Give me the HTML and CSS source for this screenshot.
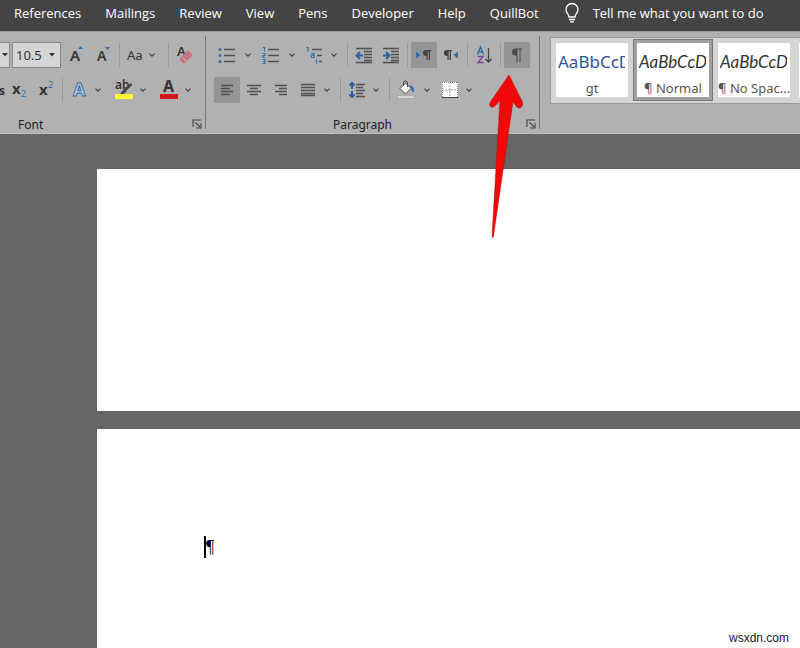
FILE: index.html
```html
<!DOCTYPE html>
<html lang="en">
<head>
    <meta charset="utf-8">
    <title>Document</title>
    <link rel="stylesheet" href="styles.css">
</head>
<body>
    <svg class="defs" aria-hidden="true">
        <symbol id="chevron" viewBox="0 0 6 4"><path d="M.5 .7 3 3.200 5.500 .7" fill="none" stroke="#444" stroke-width="1.2"/></symbol>
        <symbol id="launcher" viewBox="0 0 10 10"><path d="M1 8V1h8M3.500 3.500l4.500 4.500M9 4v5H4" fill="none" stroke="#444" stroke-width="1.1"/></symbol>
    </svg>

    <nav class="tabs">
        <a href="#">References</a>
        <a href="#">Mailings</a>
        <a href="#">Review</a>
        <a href="#">View</a>
        <a href="#">Pens</a>
        <a href="#">Developer</a>
        <a href="#">Help</a>
        <a href="#">QuillBot</a>
        <button class="tell-me">
            <svg width="16" height="20" viewBox="0 0 16 20" fill="none" stroke="#fff" stroke-width="1.3"><path d="M5 14c0-3-3-4-3-7.500a6 6 0 0 1 12 0c0 3.500-3 4.500-3 7.500zM5 16.500h6M6 18.800h4"/></svg>
            <span>Tell me what you want to do</span>
        </button>
    </nav>

    <header class="ribbon">
        <section class="group font-group">
            <div class="row">
                <button class="font-name" aria-label="Font name"><svg width="6" height="4"><path d="M0 0h6L3 3.500z" fill="#333"/></svg></button>
                <span class="size-box">
                    <select aria-label="Font size"><option>10.5</option></select>
                    <svg width="6" height="4"><path d="M0 0h6L3 3.500z" fill="#333"/></svg>
                </span>
                <button class="tool" aria-label="Grow font"><svg width="20" height="20"><text x="4" y="16" class="glyph g15 medium">A</text><path d="M12 4l2.500-3L17 4z" fill="#2f6fae"/></svg></button>
                <button class="tool" aria-label="Shrink font"><svg width="20" height="20"><text x="4" y="16" class="glyph g14 medium">A</text><path d="M12 2h5l-2.500 3z" fill="#2f6fae"/></svg></button>
                <span class="sep"></span>
                <button class="case">Aa<svg width="6" height="4"><use href="#chevron"/></svg></button>
                <span class="sep"></span>
                <button class="tool" aria-label="Clear formatting"><svg width="20" height="20"><text x="2" y="11" class="glyph g13 medium">A</text><path d="M5 13.500 12 6q1-1 2 0l3 3q1 1 0 2l-7 7q-1 .7-2 0l-3-3q-.6-.8 0-1.500z" fill="#c9727e"/><path d="M7 12l5 5" stroke="#e2b5ba"/></svg></button>
            </div>
            <div class="row">
                <button class="strike" aria-label="Strikethrough">s</button>
                <button class="tool" aria-label="Subscript"><svg width="20" height="20"><text x="3" y="14" class="glyph g15 bold">x</text><text x="12" y="17" class="glyph g9 blue">2</text></svg></button>
                <button class="tool" aria-label="Superscript"><svg width="20" height="20"><text x="3" y="15" class="glyph g15 bold">x</text><text x="12" y="8" class="glyph g9 blue">2</text></svg></button>
                <span class="sep"></span>
                <button class="tool split" aria-label="Text effects"><svg width="20" height="20"><text x="4" y="16" class="effect">A</text></svg><svg width="6" height="4"><use href="#chevron"/></svg></button>
                <button class="tool split spaced" aria-label="Highlight colour"><svg width="20" height="20"><text x="1" y="9" class="glyph g12 medium">ab</text><path d="M17.500 4 10 11" stroke="#444" stroke-width="2.500"/><path d="M10 9l2.500 2.500L9 14H6z" fill="#444"/><path d="M1 14h18v5H1z" fill="#fff72b"/></svg><svg width="6" height="4"><use href="#chevron"/></svg></button>
                <button class="tool split spaced" aria-label="Font colour"><svg width="20" height="20"><text x="4" y="12" class="glyph g16 bold">A</text><path d="M1 14h18v5H1z" fill="#d31a1a"/></svg><svg width="6" height="4"><use href="#chevron"/></svg></button>
            </div>
            <footer><span>Font</span><button class="launch" aria-label="Font settings"><svg width="10" height="10"><use href="#launcher"/></svg></button></footer>
        </section>

        <section class="group paragraph-group">
            <div class="row">
                <button class="tool split wide" aria-label="Bullets"><svg width="20" height="20"><path d="M7 4.500h11M7 10.500h11M7 16.500h11" class="line"/><g fill="#2f6fae"><circle cx="3" cy="4.500" r="1.500"/><circle cx="3" cy="10.500" r="1.500"/><circle cx="3" cy="16.500" r="1.500"/></g></svg><svg width="6" height="4"><use href="#chevron"/></svg></button>
                <button class="tool split wide" aria-label="Numbering"><svg width="20" height="20"><path d="M7 4.500h11M7 10.500h11M7 16.500h11" class="line"/><path d="M2 2.500h1.500v4M1.500 8.500H4v2H2v2h2.300M1.500 14.500H4v4H1.500M2 16.500h2" fill="none" stroke="#2f6fae" stroke-width="1.100"/></svg><svg width="6" height="4"><use href="#chevron"/></svg></button>
                <button class="tool split" aria-label="Multilevel list"><svg width="20" height="20"><path d="M7 4.500h10M12 10.500h5M14 16.500h3" class="line"/><path d="M1.500 2.500H3v4M6 8.500h3v4H6.300v-2H9M11.500 14.500v4" fill="none" stroke="#2f6fae" stroke-width="1.200"/></svg><svg width="6" height="4"><use href="#chevron"/></svg></button>
                <span class="sep late"></span>
                <button class="tool" aria-label="Decrease indent"><svg width="20" height="20"><path d="M2 3.500h16M10 6.500h8M10 9.500h8M10 12.500h8M10 15.500h8M2 17.500h16" class="line"/><path d="M9 10.500H3M6 7l-3.500 3.500L6 14" class="arrow-line"/></svg></button>
                <button class="tool" aria-label="Increase indent"><svg width="20" height="20"><path d="M2 3.500h16M10 6.500h8M10 9.500h8M10 12.500h8M10 15.500h8M2 17.500h16" class="line"/><path d="M2 10.500h6M5 7l3.500 3.500L5 14" class="arrow-line"/></svg></button>
                <span class="sep"></span>
                <button class="tool active" aria-label="Left to right"><svg width="20" height="20"><path d="M2 6.500v7l4.500-3.500z" fill="#2f6fae"/><path d="M11.500 5H17v1.200h-1V15h-1.300V6.200h-1V15h-1.300v-4a3 3 0 0 1-.9-6z" fill="#444"/></svg></button>
                <button class="tool" aria-label="Right to left"><svg width="20" height="20"><path d="M17 6.500v7L12.500 10z" fill="#2f6fae"/><path d="M5.500 5H11v1.200h-1V15H8.700V6.200h-1V15H6.400v-4a3 3 0 0 1-.9-6z" fill="#444"/></svg></button>
                <span class="sep"></span>
                <button class="tool" aria-label="Sort"><svg width="20" height="20"><path d="M3.500 9.500 6.500 2l3 7.500M4.500 7h4" fill="none" stroke="#2f6fae" stroke-width="1.400"/><path d="M4 11.500h5L4 17.500h5.500" fill="none" stroke="#80449a" stroke-width="1.400"/><path d="M14.500 3v14M11.500 14l3 3 3-3" fill="none" stroke="#444" stroke-width="1.300"/></svg></button>
                <span class="sep"></span>
                <button class="tool active" aria-label="Show paragraph marks"><svg width="20" height="20"><path d="M8.500 3.500H15v1h-1.500V17h-1V4.500h-2V17h-1V10.500H8.500a3.500 3.500 0 0 1 0-7z" fill="#4a4a4a"/></svg></button>
            </div>
            <div class="row">
                <button class="tool active" aria-label="Align left"><svg width="20" height="20"><path d="M4 5.500h12M4 8.500h9M4 11.500h12M4 14.500h9" class="line"/></svg></button>
                <button class="tool" aria-label="Align centre"><svg width="20" height="20"><path d="M3 5.500h14M6 8.500h8M3 11.500h14M6 14.500h8" class="line"/></svg></button>
                <button class="tool" aria-label="Align right"><svg width="20" height="20"><path d="M4 5.500h12M8 8.500h8M4 11.500h12M8 14.500h8" class="line"/></svg></button>
                <button class="tool split" aria-label="Justify"><svg width="20" height="20"><path d="M3 4.500h14M3 7.500h14M3 10.500h14M3 13.500h14M3 15.500h14" class="line"/></svg><svg width="6" height="4"><use href="#chevron"/></svg></button>
                <span class="sep late"></span>
                <button class="tool split" aria-label="Line spacing"><svg width="20" height="20"><path d="M9 4.500h9M9 7.500h7M9 10.500h9M9 13.500h7M9 16.500h9" class="line"/><path d="M5 3v6M5 11v6M2.500 5.500 5 3l2.500 2.500M2.500 14.500 5 17l2.500-2.500" class="arrow-line"/></svg><svg width="6" height="4"><use href="#chevron"/></svg></button>
                <span class="sep late"></span>
                <button class="tool split wide" aria-label="Shading"><svg width="20" height="20"><path d="M4 8.500 9.500 3l5.500 5.500L9.500 14z" fill="#fff" stroke="#444"/><path d="M7.500 6V3q0-2 2-2t2 2v4" fill="none" stroke="#444"/><path d="M14 5q4 .5 4 7-3 0-3-4z" fill="#2f6fae"/><path d="M1.500 15.500h17v3h-17z" fill="#d5d5d5" stroke="#999" stroke-width=".6"/></svg><svg width="6" height="4"><use href="#chevron"/></svg></button>
                <button class="tool split" aria-label="Borders"><svg width="20" height="20"><path d="M2 2h16v16H2z" fill="#fff"/><path d="M2.500 2v16M17.500 2v16M2 2.500h16" stroke="#888" stroke-dasharray="1 1"/><path d="M10 2v16M2 10h16" stroke="#999" stroke-dasharray="2 1"/><path d="M2 17.500h16" stroke="#444"/></svg><svg width="6" height="4"><use href="#chevron"/></svg></button>
            </div>
            <footer><span>Paragraph</span><button class="launch" aria-label="Paragraph settings"><svg width="10" height="10"><use href="#launcher"/></svg></button></footer>
        </section>

        <section class="gallery">
            <button class="style heading"><span class="sample">AaBbCcD</span><span class="name">gt</span></button>
            <button class="style selected"><span class="sample">AaBbCcD</span><span class="name">¶ Normal</span></button>
            <button class="style"><span class="sample">AaBbCcD</span><span class="name">¶ No Spac...</span></button>
            <button class="style" aria-label="More styles"></button>
        </section>
    </header>

    <main class="workspace">
        <article class="page"></article>
        <article class="page current"><p><span class="caret"></span>¶</p></article>
    </main>

    <svg class="pointer" width="42" height="170"><path d="M23 3 36 29Q38 34 34 36Q31 37 27 29.500L7.500 164Q6.500 167 6 164L14 28 10 33Q6 37 4 34Q3 32 5 29Z" fill="#f20808" stroke="#c40000" stroke-width=".5"/></svg>
    <span class="credit">wsxdn.com</span>
</body>
</html>
```
FILE: styles.css
```css
* {
    box-sizing: border-box;
}
body {
    margin: 0;
    min-height: 100vh;
    display: flex;
    flex-direction: column;
    position: relative;
    overflow: hidden;
    background: #666;
    color: #333;
    font-family: "Noto Sans", "Open Sans", sans-serif;
    font-size: 12px;
}
button, select {
    margin: 0;
    padding: 0;
    border: 0;
    background: none;
    color: inherit;
    font: inherit;
}
svg {
    flex: none;
    overflow: visible;
}
.defs {
    position: absolute;
    width: 0;
    height: 0;
}

/* tabs */
.tabs {
    display: flex;
    align-items: center;
    gap: 24px;
    height: 31px;
    padding: 0 0 5px 14px;
    background: #444;
    color: #fff;
    font-family: "Open Sans", sans-serif;
    font-size: 13px;
    white-space: nowrap;
}
.tabs a {
    color: #fff;
    text-decoration: none;
}
.tell-me {
    display: flex;
    align-items: center;
    gap: 13px;
    padding-left: 1px;
}

/* ribbon */
.ribbon {
    display: flex;
    height: 103px;
    padding-top: 4px;
    background: #b1b1b1;
    border-top: 1px solid #999;
    border-bottom: 1px solid #c0c0c0;
}
.group {
    flex: none;
    height: 93px;
    border-right: 1px solid #777;
}
.font-group {
    width: 206px;
}
.paragraph-group {
    width: 334px;
    padding-left: 8px;
}
.row {
    display: flex;
    align-items: center;
    gap: 1px;
    height: 26px;
    margin-top: 9px;
}
.row:first-child {
    margin-top: 6px;
}
.tool {
    display: flex;
    flex: none;
    align-items: center;
    justify-content: center;
    width: 26px;
    height: 26px;
}
.tool.active {
    background: #959595;
}
.tool.split {
    justify-content: flex-start;
    gap: 6px;
    width: 38px;
    padding-left: 3px;
}
.tool.split.wide {
    gap: 8px;
    width: 43px;
}
.tool.spaced {
    margin-left: 6px;
}
.sep {
    flex: none;
    width: 1px;
    height: 24px;
    margin: 0 2px;
    background: #999;
}
.sep.late {
    margin-left: 6px;
}
.font-name {
    width: 10px;
    height: 26px;
    background: #d5d5d5;
    border: 1px solid #888;
    border-left: 0;
    line-height: 0;
}
.size-box {
    position: relative;
    width: 49px;
    height: 26px;
    margin: 0 1px;
}
.size-box select {
    appearance: none;
    width: 100%;
    height: 100%;
    padding-left: 3px;
    background: #d5d5d5;
    border: 1px solid #888;
    font-size: 13px;
}
.size-box svg {
    position: absolute;
    top: 11px;
    right: 6px;
}
.case {
    display: flex;
    align-items: center;
    gap: 6px;
    width: 42px;
    padding-left: 4px;
    font-size: 13px;
}
.strike {
    width: 5px;
    overflow: hidden;
    direction: rtl;
    font-weight: bold;
}
.line {
    fill: none;
    stroke: #505050;
    stroke-width: 1.3;
}
.arrow-line {
    fill: none;
    stroke: #2862a5;
    stroke-width: 2;
}
.glyph {
    fill: #333;
}
.g9 { font-size: 9px; }
.g12 { font-size: 12px; }
.g13 { font-size: 13px; }
.g14 { font-size: 14px; }
.g15 { font-size: 15px; }
.g16 { font-size: 16px; }
.medium { font-weight: 600; }
.bold { font-weight: bold; }
.blue { fill: #2f6fae; }
.effect {
    fill: #b9cfe6;
    stroke: #3a70a8;
    stroke-width: 1;
    font-size: 18px;
    font-weight: bold;
}
.group footer {
    display: flex;
    align-items: center;
    height: 18px;
    margin-top: 12px;
    color: #222;
}
.font-group footer {
    padding-left: 18px;
}
.group footer span {
    flex: 1;
}
.paragraph-group footer span {
    text-align: center;
    margin-right: 12px;
}
.launch {
    width: 16px;
    height: 18px;
    line-height: 0;
}

/* styles gallery */
.gallery {
    display: flex;
    flex: 1;
    gap: 9px;
    height: 67px;
    margin: 1px 0 0 10px;
    padding: 5px;
    min-width: 0;
    overflow: hidden;
    background: #d5d5d5;
    border: 1px solid #999;
    border-right: 0;
}
.style {
    flex: none;
    width: 72px;
    height: 54px;
    overflow: hidden;
    background: #fff;
    white-space: nowrap;
}
.style.selected {
    outline: 3px solid #a0a0a0;
    box-shadow: 0 0 0 4px #777;
}
.sample {
    display: block;
    width: 67px;
    height: 34px;
    margin-left: 2px;
    overflow: hidden;
    text-align: left;
    font-family: Lato, sans-serif;
    font-size: 17px;
    font-style: italic;
    line-height: 38px;
}
.heading .sample {
    color: #2f5496;
    font-family: "Noto Sans", sans-serif;
    font-style: normal;
}
.name {
    display: block;
    height: 20px;
    color: #555;
    font-size: 13px;
    line-height: 22px;
}

/* document */
.workspace {
    display: flex;
    flex: 1;
    flex-direction: column;
    gap: 18px;
    padding: 35px 0 0 97px;
}
.page {
    height: 242px;
    background: #fff;
}
.page.current {
    flex: 1;
    padding: 107px 0 0 107px;
}
.page p {
    display: flex;
    align-items: center;
    margin: 0;
    height: 22px;
    color: #000;
    font-family: "Liberation Serif", serif;
    font-size: 18px;
}
.caret {
    width: 2px;
    height: 22px;
    background: #000;
}

.pointer {
    position: absolute;
    top: 72px;
    left: 486px;
}
.credit {
    position: absolute;
    right: 11px;
    bottom: 3px;
    color: #222;
    font-family: "Liberation Sans", sans-serif;
    font-size: 12px;
}
```
